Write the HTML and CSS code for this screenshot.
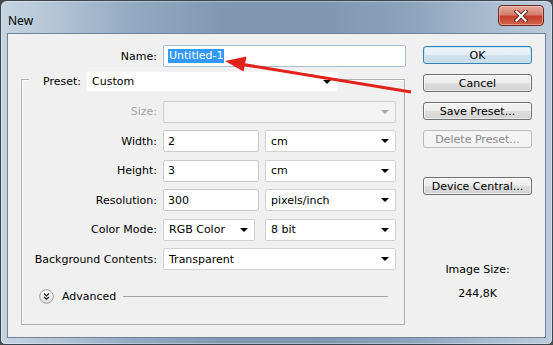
FILE: index.html
```html
<!DOCTYPE html>
<html>
<head>
<meta charset="utf-8">
<title>New</title>
<link rel="stylesheet" href="styles.css">
</head>
<body>
<div class="window">
  <div class="titlebar">
    <span class="title">New</span>
    <div class="close">
      <svg width="16" height="12" viewBox="0 0 16 12">
        <path d="M3.5 1.5 L12.5 10.5 M12.5 1.5 L3.5 10.5" stroke="#5a1f18" stroke-width="4" stroke-linecap="square"/>
        <path d="M3.5 1.5 L12.5 10.5 M12.5 1.5 L3.5 10.5" stroke="#ffffff" stroke-width="2.2" stroke-linecap="square"/>
      </svg>
    </div>
  </div>
  <div class="client">
    <div class="main">
      <div class="name-row">
        <span class="lbl name-lbl">Name:</span>
        <div class="field name-field"><span class="selected">Untitled-1</span></div>
      </div>
      <div class="group">
        <div class="legend">
          <span class="legend-lbl">Preset:</span>
          <div class="dd preset"><span>Custom</span><i class="caret"></i></div>
        </div>
        <div class="rows">
          <div class="row">
            <span class="lbl dis">Size:</span>
            <div class="dd full disabled"><i class="caret"></i></div>
          </div>
          <div class="row">
            <span class="lbl">Width:</span>
            <div class="field num"><span>2</span></div>
            <div class="dd unit"><span>cm</span><i class="caret"></i></div>
          </div>
          <div class="row">
            <span class="lbl">Height:</span>
            <div class="field num"><span>3</span></div>
            <div class="dd unit"><span>cm</span><i class="caret"></i></div>
          </div>
          <div class="row">
            <span class="lbl">Resolution:</span>
            <div class="field num"><span>300</span></div>
            <div class="dd unit"><span>pixels/inch</span><i class="caret"></i></div>
          </div>
          <div class="row">
            <span class="lbl">Color Mode:</span>
            <div class="dd mode"><span>RGB Color</span><i class="caret"></i></div>
            <div class="dd unit"><span>8 bit</span><i class="caret"></i></div>
          </div>
          <div class="row">
            <span class="lbl">Background Contents:</span>
            <div class="dd full"><span>Transparent</span><i class="caret"></i></div>
          </div>
        </div>
        <div class="advanced">
          <svg class="adv-icon" width="15" height="15" viewBox="0 0 15 15">
            <defs>
              <linearGradient id="ag" x1="0" y1="0" x2="0" y2="1">
                <stop offset="0" stop-color="#ffffff"/>
                <stop offset="1" stop-color="#dcdcdc"/>
              </linearGradient>
            </defs>
            <circle cx="7.5" cy="7.5" r="6.8" fill="url(#ag)" stroke="#9a9a9a" stroke-width="1"/>
            <path d="M5 4.6 L7.5 6.9 L10 4.6 M5 7.9 L7.5 10.2 L10 7.9" fill="none" stroke="#2a2a2a" stroke-width="1.3"/>
          </svg>
          <span class="adv-text">Advanced</span>
          <span class="adv-line"></span>
        </div>
      </div>
    </div>
    <div class="side">
      <div class="btn default">OK</div>
      <div class="btn">Cancel</div>
      <div class="btn">Save Preset...</div>
      <div class="btn disabled">Delete Preset...</div>
      <div class="btn device">Device Central...</div>
      <div class="info label-size">Image Size:</div>
      <div class="info size-val">244,8K</div>
    </div>
  </div>
</div>
<svg class="arrow" width="553" height="345" viewBox="0 0 553 345">
  <line x1="411" y1="92" x2="240" y2="64" stroke="#e2231c" stroke-width="3"/>
  <polygon points="225,61 246.5,56.5 243.5,71.5" fill="#e2231c"/>
</svg>
</body>
</html>
```

FILE: styles.css
```css
* { box-sizing: border-box; }
html, body { margin: 0; padding: 0; }
body {
  position: relative;
  width: 553px;
  height: 345px;
  overflow: hidden;
  background: #4a4a4a;
  font-family: "DejaVu Sans", "Liberation Sans", sans-serif;
  font-size: 11px;
  color: #000;
}
.window {
  width: 553px;
  height: 345px;
  border: 1px solid #3b4550;
  border-radius: 7px 7px 5px 5px;
  background: linear-gradient(90deg, #c6d4e2 0%, #b3c4d6 10%, #93aac2 24%, #8098b2 40%, #7f97b1 58%, #8ca3bc 74%, #a8bbcf 88%, #bccbdb 100%);
  box-shadow: inset 0 0 0 1px rgba(255,255,255,0.35);
  display: flex;
  flex-direction: column;
}
.titlebar {
  height: 32px;
  flex: none;
  display: flex;
  justify-content: space-between;
  align-items: flex-start;
}
.title {
  font-family: "Noto Sans", "Liberation Sans", sans-serif;
  font-size: 12px;
  line-height: 14px;
  margin: 13px 0 0 7px;
  color: #000;
}
.close {
  width: 46px;
  height: 21px;
  margin: 4px 8px 0 0;
  border: 1px solid #6b2a22;
  border-radius: 4px;
  background: linear-gradient(#e5ab9f 0%, #d57c6b 45%, #c63f2d 55%, #d4644d 100%);
  box-shadow: inset 0 0 0 1px rgba(255,220,210,0.45);
  display: flex;
  align-items: center;
  justify-content: center;
}
.close svg { display: block; }
.client {
  flex: 1;
  margin: 0 6px 6px;
  border: 1px solid #6f8297;
  background: #f0f0f0;
  display: flex;
  gap: 17px;
  padding: 11px 13px 0 13px;
}
.main {
  width: 385px;
  flex: none;
  display: flex;
  flex-direction: column;
}
.name-row {
  display: flex;
  align-items: center;
  gap: 6px;
  height: 22px;
}
.lbl {
  text-align: right;
  white-space: nowrap;
}
.name-lbl { width: 136px; }
.field {
  height: 22px;
  background: #fff;
  border: 1px solid #c9c9c9;
  border-radius: 2px;
  display: flex;
  align-items: center;
  padding-left: 4px;
}
.name-field {
  width: 243px;
  border-color: #a9bed3;
}
.selected {
  background: #3399ff;
  color: #fff;
  line-height: 14px;
  padding: 0 1px;
}
.group {
  margin-top: 12px;
  width: 384px;
  height: 246px;
  border: 1px solid #b0b0b0;
  box-shadow: inset 1px 1px 0 #fbfbfb;
  display: flex;
  flex-direction: column;
}
.legend {
  align-self: flex-start;
  margin: -9px 0 0 7px;
  padding-right: 2px;
  background: #f0f0f0;
  display: flex;
  align-items: center;
  gap: 5px;
}
.legend-lbl {
  width: 52px;
  text-align: right;
}
.dd {
  position: relative;
  height: 22px;
  background: #fff;
  border: 1px solid #d2d2d2;
  border-radius: 2px;
  display: flex;
  align-items: center;
  padding-left: 5px;
}
.caret {
  position: absolute;
  right: 6px;
  top: 8px;
  width: 0;
  height: 0;
  border-left: 4px solid transparent;
  border-right: 4px solid transparent;
  border-top: 4px solid #000;
}
.preset {
  width: 252px;
  height: 21px;
  border-color: #f4f4f4;
}
.rows {
  margin-top: 8.5px;
  display: flex;
  flex-direction: column;
  gap: 7.6px;
}
.row {
  display: flex;
  align-items: center;
  gap: 6px;
  height: 22px;
}
.row .lbl { width: 135px; }
.lbl.dis { color: #a3a3a3; }
.full { width: 233px; }
.disabled {
  background: #f3f3f3;
  border-color: #cfcfcf;
}
.disabled .caret { border-top-color: #a8a8a8; }
.num { width: 96px; }
.unit { width: 131px; }
.mode { width: 92px; margin-right: 4px; }
.advanced {
  margin: 18px 0 0 17px;
  display: flex;
  align-items: center;
  height: 16px;
}
.adv-icon { display: block; flex: none; }
.adv-text { margin-left: 8px; }
.adv-line {
  margin-left: 7px;
  width: 265px;
  height: 1px;
  background: #a5a5a5;
}
.side {
  width: 109px;
  flex: none;
  padding-top: 1px;
  display: flex;
  flex-direction: column;
  gap: 10px;
}
.btn {
  height: 18px;
  border: 1px solid #707070;
  border-radius: 3px;
  background: linear-gradient(#f4f4f4 0%, #ececec 48%, #dedede 52%, #d2d2d2 100%);
  box-shadow: inset 0 0 0 1px rgba(255,255,255,0.6);
  display: flex;
  align-items: center;
  justify-content: center;
  white-space: nowrap;
}
.btn.default {
  border-color: #3c7fb1;
  background: linear-gradient(#eef5fa 0%, #e3eef6 48%, #d3e2ee 52%, #c6d9e8 100%);
  box-shadow: inset 0 0 0 1px #bfe4f7;
}
.btn.disabled {
  border-color: #b7bcbf;
  background: #f4f4f4;
  box-shadow: none;
  color: #8a8a8a;
}
.btn.device { margin-top: 19px; }
.info {
  text-align: center;
  line-height: 14px;
}
.label-size { margin-top: 58px; }
.arrow {
  position: absolute;
  left: 0;
  top: 0;
  pointer-events: none;
}
```
